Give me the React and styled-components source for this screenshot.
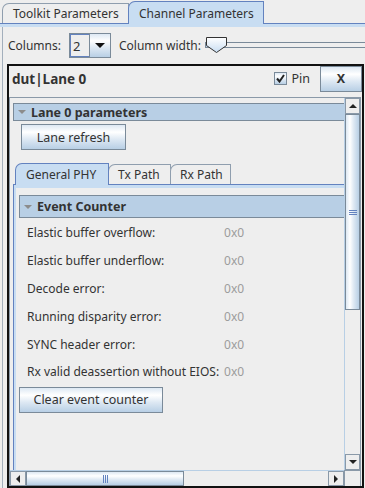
import React from 'react';
import styled, { createGlobalStyle } from 'styled-components';

const GlobalStyle = createGlobalStyle`
  html, body {
    margin: 0;
    padding: 0;
  }
  body {
    background: #eeeeee;
    font-family: "Noto Sans", "DejaVu Sans", sans-serif;
    font-size: 12px;
    color: #333333;
  }
`;

const metal = (dir = 'to bottom') =>
  `linear-gradient(${dir}, #dde8f3 0%, #ffffff 30%, #dde8f3 60%, #b8cfe5 100%)`;

const Window = styled.div`
  width: 365px;
  height: 488px;
  overflow: hidden;
  display: flex;
  flex-direction: column;
`;

const TabStrip = styled.div`
  display: flex;
  align-items: flex-end;
  height: ${props => props.$height || 23}px;
  padding-left: ${props => props.$indent || 2}px;
  box-sizing: border-box;
  flex-shrink: 0;
`;

const Tab = styled.div`
  box-sizing: border-box;
  height: ${props => props.$height}px;
  width: ${props => props.$width}px;
  padding-left: ${props => props.$pad || 10}px;
  display: flex;
  align-items: center;
  border: 1px solid ${props => (props.$selected ? '#6382bf' : '#8f9eae')};
  border-bottom: none;
  border-top-left-radius: 7px;
  background: ${props => (props.$selected ? '#c8ddf2' : '#eeeeee')};
  margin-right: -1px;
  margin-bottom: ${props => (props.$selected ? -1 : 0)}px;
  position: relative;
  z-index: ${props => (props.$selected ? 1 : 0)};
  white-space: nowrap;
`;

const TabBand = styled.div`
  height: 3px;
  flex-shrink: 0;
  border-top: 1px solid #6382bf;
  background: #c8ddf2;
  border-left: ${props => (props.$edge ? '1px solid #6382bf' : 'none')};
`;

const ContentPanel = styled.div`
  flex: 1;
  min-height: 0;
  margin-left: 2px;
  border-left: 1px solid #a3afbc;
  display: flex;
  flex-direction: column;
`;

const Toolbar = styled.div`
  height: 37px;
  display: flex;
  align-items: center;
  padding-left: 5px;
  flex-shrink: 0;
`;

const Label = styled.span`
  white-space: nowrap;
  margin-right: ${props => props.$gap || 0}px;
`;

const Combo = styled.div`
  display: flex;
  width: 42px;
  height: 25px;
  box-sizing: border-box;
  border: 1px solid #7a8a99;
  margin-right: 8px;
  flex-shrink: 0;
`;

const ComboField = styled.div`
  flex: 1;
  border: 1px solid #6382bf;
  border-right: none;
  padding-left: 2px;
  display: flex;
  align-items: center;
  font-size: 13px;
`;

const ComboArrow = styled.div`
  width: 20px;
  background: ${metal()};
  border-left: 1px solid #7a8a99;
  display: flex;
  align-items: center;
  justify-content: center;
`;

const DownTriangle = styled.span`
  width: 0;
  height: 0;
  border-left: ${props => props.$size || 5}px solid transparent;
  border-right: ${props => props.$size || 5}px solid transparent;
  border-top: ${props => (props.$size || 5)}px solid ${props => props.$color || '#333'};
`;

const UpTriangle = styled.span`
  width: 0;
  height: 0;
  border-left: 4px solid transparent;
  border-right: 4px solid transparent;
  border-bottom: 4px solid #222;
`;

const SideTriangle = styled.span`
  width: 0;
  height: 0;
  border-top: 4px solid transparent;
  border-bottom: 4px solid transparent;
  ${props => (props.$left ? 'border-right' : 'border-left')}: 4px solid #222;
`;

const Slider = styled.div`
  flex: 1;
  height: 17px;
  margin-left: 4px;
  display: flex;
  align-items: center;
  position: relative;
`;

const SliderTrack = styled.div`
  flex: 1;
  height: 6px;
  margin-top: -2px;
  box-sizing: border-box;
  border: 1px solid #7a8a99;
  border-right: none;
  background: linear-gradient(to right, #b8cfe5 0 8px, #eeeeee 8px);
`;

const SliderThumb = styled.svg`
  position: absolute;
  left: 1px;
  top: 0;
`;

const Card = styled.div`
  flex: 1;
  min-height: 0;
  margin-left: 4px;
  width: 357px;
  box-sizing: border-box;
  border: 2px solid #111111;
  display: flex;
  flex-direction: column;
`;

const CardHeader = styled.div`
  height: 27px;
  display: flex;
  align-items: center;
  padding-left: 3px;
  margin-top: -1px;
  flex-shrink: 0;
  font-size: 12.5px;
`;

const CardTitle = styled.div`
  flex: 1;
  font-weight: bold;
  font-size: 13.5px;
  white-space: nowrap;
`;

const PinBox = styled.span`
  width: 13px;
  height: 13px;
  box-sizing: border-box;
  border: 1px solid #7a8a99;
  background: ${metal()};
  display: flex;
  align-items: center;
  justify-content: center;
  margin-right: 4px;
`;

const PinLabel = styled.span`
  margin-right: 10px;
`;

const Button = styled.div`
  box-sizing: border-box;
  width: ${props => props.$width}px;
  height: 26px;
  border: 1px solid #7a8a99;
  background: ${metal()};
  display: flex;
  align-items: center;
  justify-content: center;
  font-weight: ${props => (props.$bold ? 'bold' : 'normal')};
  font-size: 12.5px;
  white-space: nowrap;
  margin: ${props => props.$margin || '0'};
  flex-shrink: 0;
`;

const ScrollPane = styled.div`
  flex: 1;
  min-height: 0;
  margin: 5px 1px 0 0;
  border: 1px solid #8a99a8;
  border-bottom: none;
  display: grid;
  grid-template-columns: 1fr 16px;
  grid-template-rows: 1fr 16px;
`;

const Viewport = styled.div`
  overflow: hidden;
  padding: 5px 0 0 3px;
  display: flex;
  flex-direction: column;
`;

const SectionBar = styled.div`
  flex-shrink: 0;
  height: ${props => props.$height || 18}px;
  box-sizing: border-box;
  border: 1px solid #7a8a99;
  border-right: none;
  background: #b8cfe5;
  display: flex;
  align-items: center;
  padding-left: 4px;
  font-weight: bold;
  font-size: 12.5px;
  white-space: nowrap;
  gap: 5px;
`;

const InnerTabs = styled.div`
  margin-top: 13px;
  flex: 1;
  display: flex;
  flex-direction: column;
`;

const TabBody = styled.div`
  flex: 1;
  border-left: 1px solid #6382bf;
  box-shadow: inset 2px 0 0 #c8ddf2;
  padding: 7px 0 0 5px;
  display: flex;
  flex-direction: column;
`;

const CounterGrid = styled.div`
  display: grid;
  grid-template-columns: max-content max-content;
  grid-auto-rows: 27.8px;
  column-gap: 5px;
  align-items: center;
  padding: 1px 0 0 8px;
  margin-bottom: 1px;
`;

const Value = styled.span`
  color: #9c9c9c;
`;

const VScroll = styled.div`
  display: flex;
  flex-direction: column;
  background: #eeeeee;
  border-left: 1px solid #b8cfe5;
`;

const HScroll = styled.div`
  display: flex;
  background: #eeeeee;
  border-top: 1px solid #b8cfe5;
`;

const ArrowButton = styled.div`
  box-sizing: border-box;
  width: ${props => (props.$vertical ? 'auto' : '16px')};
  height: ${props => (props.$vertical ? '16px' : 'auto')};
  border: 1px solid #8a99a8;
  background: #eeeeee;
  display: flex;
  align-items: center;
  justify-content: center;
  flex-shrink: 0;
`;

const Thumb = styled.div`
  box-sizing: border-box;
  ${props => (props.$vertical ? `height: ${props.$size}px;` : `width: ${props.$size}px;`)}
  border: 1px solid #7a8a99;
  background: ${props => (props.$vertical ? metal('to right') : metal('to bottom'))};
  display: flex;
  align-items: center;
  justify-content: center;
  flex-shrink: 0;
`;

const Grip = styled.div`
  width: ${props => (props.$vertical ? '8px' : '5px')};
  height: ${props => (props.$vertical ? '5px' : '8px')};
  background: ${props =>
    props.$vertical
      ? 'repeating-linear-gradient(to bottom, #6382bf 0 1px, transparent 1px 2px)'
      : 'repeating-linear-gradient(to right, #6382bf 0 1px, transparent 1px 2px)'};
`;

const Track = styled.div`
  flex: 1;
`;

const Corner = styled.div`
  background: #eeeeee;
  border-top: 1px solid #8a99a8;
  border-left: 1px solid #8a99a8;
`;

const counters = [
  ['Elastic buffer overflow:', '0x0'],
  ['Elastic buffer underflow:', '0x0'],
  ['Decode error:', '0x0'],
  ['Running disparity error:', '0x0'],
  ['SYNC header error:', '0x0'],
  ['Rx valid deassertion without EIOS:', '0x0'],
];

const App = () => {
  return (
    <Window>
      <GlobalStyle />
      <TabStrip>
        <Tab $width={127} $height={20}>Toolkit Parameters</Tab>
        <Tab $width={136} $height={23} $selected $pad={10}>Channel Parameters</Tab>
      </TabStrip>
      <TabBand />
      <ContentPanel>
        <Toolbar>
          <Label $gap={8}>Columns:</Label>
          <Combo>
            <ComboField>2</ComboField>
            <ComboArrow>
              <DownTriangle $size={5} $color='#111' />
            </ComboArrow>
          </Combo>
          <Label>Column width:</Label>
          <Slider>
            <SliderTrack />
            <SliderThumb width='22' height='17' viewBox='0 0 22 17'>
              <defs>
                <linearGradient id='thumbFill' x1='0' y1='0' x2='0' y2='1'>
                  <stop offset='0' stopColor='#ffffff' />
                  <stop offset='1' stopColor='#c8ddf2' />
                </linearGradient>
              </defs>
              <path
                d='M0.5 0.5 H20.5 V8.5 L10.5 15.5 L0.5 8.5 Z'
                fill='url(#thumbFill)'
                stroke='#333'
              />
            </SliderThumb>
          </Slider>
        </Toolbar>
        <Card>
          <CardHeader>
            <CardTitle>dut|Lane 0</CardTitle>
            <PinBox>
              <svg width='9' height='9' viewBox='0 0 9 9'>
                <path d='M1 4.5 L3.5 7.5 L8 1' fill='none' stroke='#222' strokeWidth='2' />
              </svg>
            </PinBox>
            <PinLabel>Pin</PinLabel>
            <Button $width={42} $bold>X</Button>
          </CardHeader>
          <ScrollPane>
            <Viewport>
              <SectionBar>
                <DownTriangle $size={4} $color='#8c8c8c' />
                Lane 0 parameters
              </SectionBar>
              <Button $width={105} $margin='3px 0 0 8px'>Lane refresh</Button>
              <InnerTabs>
                <TabStrip $indent={2} $height={21}>
                  <Tab $width={94} $height={22} $selected $pad={10}>General PHY</Tab>
                  <Tab $width={63} $height={20} $pad={9}>Tx Path</Tab>
                  <Tab $width={61} $height={20} $pad={9}>Rx Path</Tab>
                </TabStrip>
                <TabBand $edge />
                <TabBody>
                  <SectionBar $height={23}>
                    <DownTriangle $size={4} $color='#8c8c8c' />
                    Event Counter
                  </SectionBar>
                  <CounterGrid>
                    {counters.map(([name, value]) => (
                      <React.Fragment key={name}>
                        <span>{name}</span>
                        <Value>{value}</Value>
                      </React.Fragment>
                    ))}
                  </CounterGrid>
                  <Button $width={144}>Clear event counter</Button>
                </TabBody>
              </InnerTabs>
            </Viewport>
            <VScroll>
              <ArrowButton $vertical>
                <UpTriangle />
              </ArrowButton>
              <Thumb $vertical $size={196}>
                <Grip $vertical />
              </Thumb>
              <Track />
              <ArrowButton $vertical>
                <DownTriangle $size={4} $color='#222' />
              </ArrowButton>
            </VScroll>
            <HScroll>
              <ArrowButton>
                <SideTriangle $left />
              </ArrowButton>
              <Thumb $size={158}>
                <Grip />
              </Thumb>
              <Track />
              <ArrowButton>
                <SideTriangle />
              </ArrowButton>
            </HScroll>
            <Corner />
          </ScrollPane>
        </Card>
      </ContentPanel>
    </Window>
  );
};

export default App;
